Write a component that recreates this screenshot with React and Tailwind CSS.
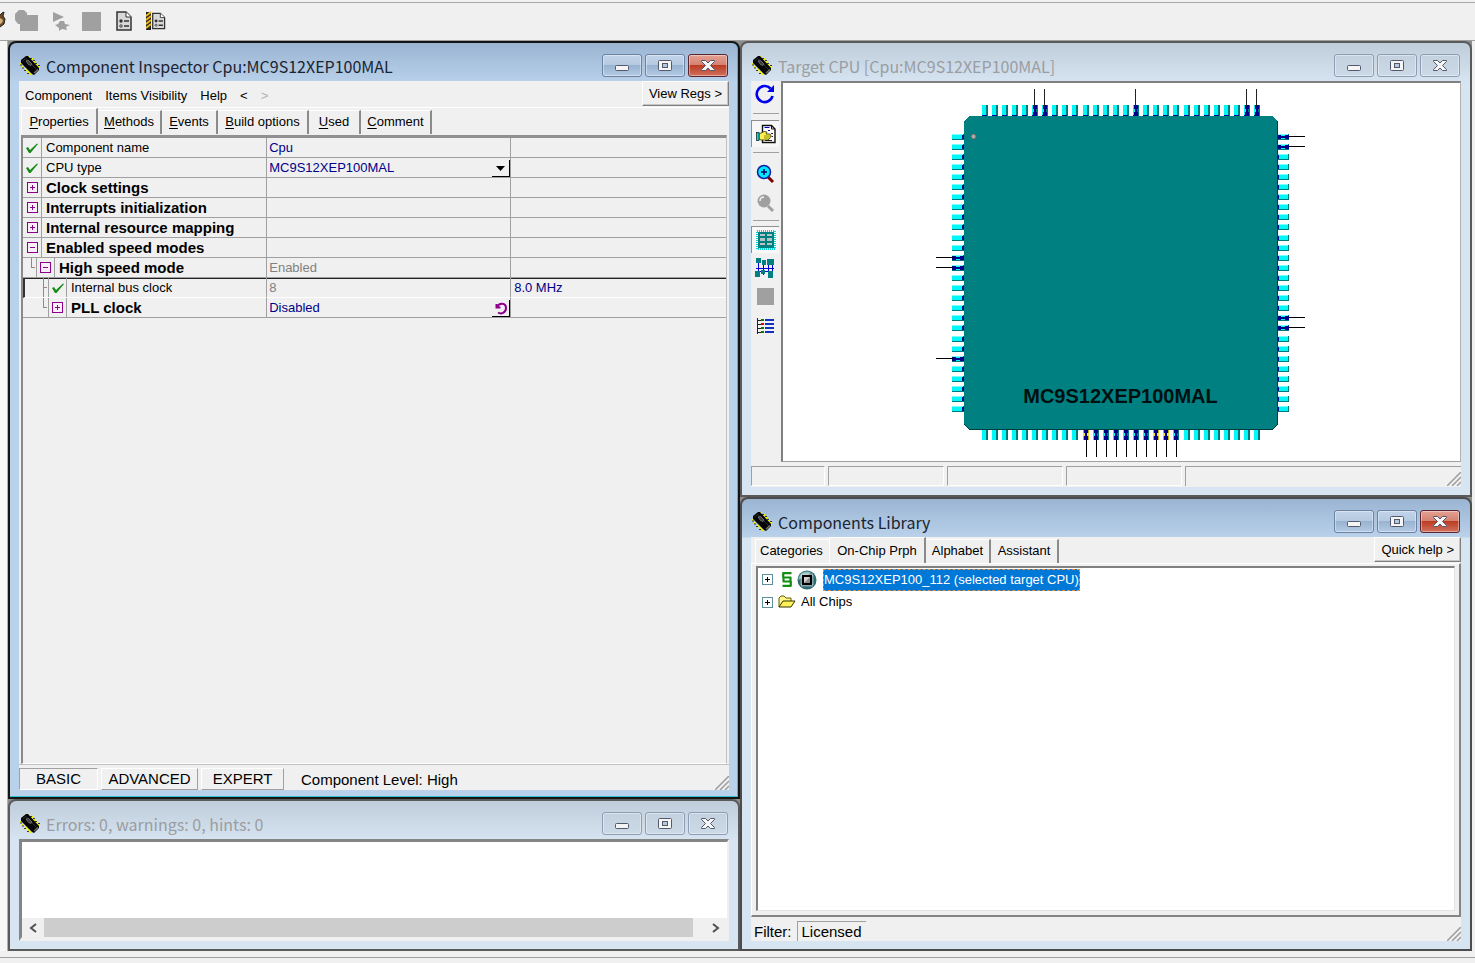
import React from 'react';

const ui = "font-['Liberation_Sans',Arial,sans-serif]";

function ChipIcon() {
  return (
    <svg className="h-[22px] w-[22px] shrink-0" viewBox="0 0 22 22" aria-hidden="true">
      <path d="M1 8H3V10H1ZM3 11H5V13H3ZM6 13H8V16H6ZM8 16H10V18H8ZM11 18H13V20H11Z" fill="#f0f000" />
      <path d="M9 1H11V3H9ZM12 3H14V5H12ZM14 6H16V8H14ZM17 8H19V10H17ZM19 11H21V13H19Z" fill="#f0f000" />
      <path d="M1 10H3M3 13H5M5 15.500H7M8 18.500H10M11 3.500H13M14 5.500H16M16 8.500H18M19 10.500H21" stroke="#222" strokeWidth="0.900" />
      <path d="M2 5L7 1H9L20 13V15L15 20L13 19L2 8Z" fill="#050505" />
      <path d="M3.500 6L7 3.500L17.500 14.500" stroke="#3c3c3c" strokeWidth="0.800" fill="none" />
      <path d="M7 6L9.500 5.500L13 9L12 10.500L9.500 9.500Z" fill="#3a3a3a" stroke="#8a8a8a" strokeWidth="0.700" />
      <path d="M15 18L19 14.500" stroke="#777" strokeWidth="1.200" />
    </svg>
  );
}

function CaptionButton({ kind, active, label }) {
  const isClose = kind === 'close';
  const skin = !active
    ? 'border-[#8e9db4] bg-linear-to-b from-[#c3d0de] to-[#ccd9e7]'
    : isClose
      ? 'border-[#5a2430] bg-[linear-gradient(#e3a193_0%,#d5806f_48%,#bb3d24_50%,#d0715d_100%)]'
      : 'border-[#6b82a3] bg-[linear-gradient(#c2d4e8_0%,#b4c9e0_48%,#98b2d0_50%,#b3cbe5_100%)]';
  return (
    <button
      type="button"
      aria-label={label}
      className={'flex h-[23px] w-10 items-center justify-center rounded-[3px] border shadow-[inset_0_0_0_1px_rgba(255,255,255,0.4)] ' + skin}
    >
      <svg className="h-[14px] w-4" viewBox="0 0 16 14" aria-hidden="true">
        {kind === 'min' && <rect x="1.5" y="6.5" width="13" height="5" rx="1" fill="#f5f5f5" stroke="#53586b" />}
        {kind === 'max' && (
          <>
            <rect x="1.5" y="1.5" width="13" height="10" rx="1" fill="#f5f5f5" stroke="#53586b" />
            <rect x="5.5" y="4.5" width="5" height="4" fill="#b4c9e0" stroke="#53586b" />
          </>
        )}
        {isClose && (
          <path d="M1.500 1.500H5.500L8 4L10.500 1.500H14.500V2.500L10.500 6.500L14.500 10.500V11.500H10.500L8 9L5.500 11.500H1.500V10.500L5.500 6.500L1.500 2.500Z" fill="#f5f5f5" stroke="#53586b" strokeLinejoin="round" />
        )}
      </svg>
    </button>
  );
}

function Window({ title, active, outlined, children }) {
  const frame = outlined
    ? 'bg-[linear-gradient(#9ab4d2_0px,#b9d1ea_40px)] border-[#141414] shadow-[inset_-1px_-1px_0_#35bfd3] pb-[7px]'
    : active
      ? 'bg-[linear-gradient(#9ab4d2_0px,#b9d1ea_38px,#d7e4f2_39px)] border-[#4c4c4c] pb-2'
      : 'bg-[linear-gradient(#bfcddb_0px,#d7e4f2_40px)] border-[#5a5a5a] pb-2';
  return (
    <section className={'flex min-h-0 min-w-0 flex-col rounded-t-lg border-2 px-[9px] ' + frame}>
      <header className="flex h-[38px] shrink-0 items-center gap-[5px] pt-[7px]">
        <ChipIcon />
        <h2 className={"min-w-0 flex-1 truncate text-[16px] leading-6 font-['Noto_Sans_CJK_SC','Noto_Sans',sans-serif] " + (active ? 'text-[#1b2430]' : 'text-[#9a9da1]')}>
          {title}
        </h2>
        <div className="flex gap-[3px] pr-px">
          <CaptionButton kind="min" active={active} label="Minimize" />
          <CaptionButton kind="max" active={active} label="Maximize" />
          <CaptionButton kind="close" active={active} label="Close" />
        </div>
      </header>
      <div className="flex min-h-0 flex-1 flex-col bg-[#f0f0f0]">{children}</div>
    </section>
  );
}

function Grip() {
  return (
    <svg className="h-[14px] w-[14px] self-end" viewBox="0 0 14 14" aria-hidden="true">
      <path d="M0 14L14 0M5 14L14 5M10 14L14 10" stroke="#9c9c9c" strokeWidth="1.500" />
    </svg>
  );
}

function SideButton({ children }) {
  return (
    <button type="button" className="h-[25px] border border-r-[#808080] border-b-[#808080] border-t-white border-l-white px-1.5 text-black shadow-[inset_-1px_-1px_0_#c4c4c4]">
      {children}
    </button>
  );
}

function Tab({ label, selected, accel, width }) {
  return (
    <button
      type="button"
      role="tab"
      aria-selected={selected}
      className={'flex items-center justify-center border-t border-r-2 border-t-white border-r-[#8a8a8a] ' + width + (selected ? ' h-[26px] border-l border-l-white' : ' h-6 pb-0.5')}
    >
      {accel ? (
        <span>
          <span className="underline underline-offset-2">{label[0]}</span>
          {label.slice(1)}
        </span>
      ) : (
        label
      )}
    </button>
  );
}

function Check() {
  return (
    <svg className="h-3 w-3" viewBox="0 0 12 12" aria-hidden="true">
      <path d="M0 6L2 5L4 8L11 1.500L12 2L4.500 11L3 11Z" fill="#178a17" />
    </svg>
  );
}

function Expander({ open, label }) {
  return (
    <button type="button" aria-label={(open ? 'Collapse ' : 'Expand ') + label}>
      <svg className="h-[11px] w-[11px]" viewBox="0 0 11 11" shapeRendering="crispEdges" aria-hidden="true">
        <rect x="0.500" y="0.500" width="10" height="10" fill="#f8f0f8" stroke="#8c008c" />
        <path d={open ? 'M3 5.500H8' : 'M3 5.500H8M5.500 3V8'} stroke="#8c008c" strokeWidth="1" />
      </svg>
    </button>
  );
}

const rows = [
  { label: 'Component name', icon: 'check', kind: 'input', value: 'Cpu' },
  { label: 'CPU type', icon: 'check', kind: 'select', value: 'MC9S12XEP100MAL' },
  { label: 'Clock settings', icon: 'plus' },
  { label: 'Interrupts initialization', icon: 'plus' },
  { label: 'Internal resource mapping', icon: 'plus' },
  { label: 'Enabled speed modes', icon: 'minus' },
  { label: 'High speed mode', icon: 'minus', depth: 1, value: 'Enabled', dim: true },
  { label: 'Internal bus clock', icon: 'check', depth: 2, value: '8', dim: true, extra: '8.0 MHz', selected: true, mid: true },
  { label: 'PLL clock', icon: 'plus', depth: 2, value: 'Disabled', reset: true },
];

function PropertyRow({ row }) {
  const bold = row.icon !== 'check';
  const line = row.selected ? 'border-b border-b-white shadow-[inset_0_1px_0_#222]' : 'border-b border-b-[#a0a0a0]';
  return (
    <tr className="h-5">
      <th scope="row" className={'p-0 text-left ' + line + (row.selected ? ' border-l-2 border-l-[#333]' : '')}>
        <div className="flex h-[19px] items-center">
          {row.depth > 0 && (
            <span className={'flex shrink-0 justify-end ' + (row.depth === 2 ? (row.selected ? 'w-[23px]' : 'w-[25px]') : 'w-[13px]')}>
              <svg className="h-[19px] w-2" viewBox="0 0 8 19" shapeRendering="crispEdges" aria-hidden="true">
                <path d={row.mid ? 'M3.500 0V19M3.500 9.500H7' : 'M3.500 0V9.500H7'} stroke="#9c8484" fill="none" />
              </svg>
            </span>
          )}
          <span className={'flex h-[19px] w-[19px] shrink-0 items-center justify-center border-r border-r-[#a0a0a0] ' + (row.depth ? 'border-l border-l-[#a0a0a0]' : '')}>
            {row.icon === 'check' ? <Check /> : <Expander open={row.icon === 'minus'} label={row.label} />}
          </span>
          <span className={'truncate pl-1 text-black ' + (bold ? 'text-[15px] leading-[19px] font-bold' : 'font-normal')}>{row.label}</span>
        </div>
      </th>
      <td className={'border-l border-l-[#a0a0a0] p-0 ' + line}>
        <div className={'flex h-[19px] items-center justify-between pl-0.5 ' + (row.dim ? 'text-[#808080]' : 'text-[#00008b]')}>
          {row.kind === 'input' && <input aria-label={row.label} defaultValue={row.value} className="w-full bg-transparent outline-none" />}
          {row.kind === 'select' && (
            <>
              <select aria-label={row.label} className="min-w-0 flex-1 appearance-none bg-transparent outline-none">
                <option>{row.value}</option>
              </select>
              <span className="flex h-[17px] w-[18px] items-center justify-center self-end border-r border-b border-r-black border-b-black">
                <svg className="h-[5px] w-[9px]" viewBox="0 0 9 5" aria-hidden="true">
                  <path d="M0 0H9L4.500 5Z" fill="#000" />
                </svg>
              </span>
            </>
          )}
          {!row.kind && row.value}
          {row.reset && (
            <button type="button" aria-label="Restore default" className="flex h-[17px] w-[18px] items-center justify-center self-end border-r border-b border-r-black border-b-black">
              <svg className="h-[14px] w-[14px]" viewBox="0 0 14 14" aria-hidden="true">
                <path d="M2.500 3V6.500H6.500M3 6C5 1.500 12 1.500 12 7C12 12 7 13.500 4 11.500" stroke="#8c008c" strokeWidth="2" fill="none" />
              </svg>
            </button>
          )}
        </div>
      </td>
      <td className={'border-l border-l-[#a0a0a0] p-0 ' + line}>
        <div className="flex h-[19px] items-center pl-[3px] text-[#00008b]">{row.extra}</div>
      </td>
    </tr>
  );
}

function Inspector() {
  return (
    <Window title="Component Inspector Cpu:MC9S12XEP100MAL" active outlined>
      <div className="flex h-[26px] shrink-0 items-start text-[13px] leading-4">
        <nav className="flex flex-1 items-center gap-[13px] pt-[7px] pl-1.5">
          <button type="button">Component</button>
          <button type="button">Items Visibility</button>
          <button type="button">Help</button>
          <button type="button" aria-label="Back">&lt;</button>
          <button type="button" aria-label="Forward" className="text-[#b0b0b0]">&gt;</button>
        </nav>
        <SideButton>View Regs &gt;</SideButton>
      </div>
      <div role="tablist" className="flex h-7 shrink-0 items-end border-t border-t-white pb-px pl-0.5 text-[13px] leading-4">
        <Tab label="Properties" accel selected width="w-[77px]" />
        <Tab label="Methods" accel width="w-16" />
        <Tab label="Events" accel width="w-14" />
        <Tab label="Build options" accel width="w-[91px]" />
        <Tab label="Used" accel width="w-[52px]" />
        <Tab label="Comment" accel width="w-[71px]" />
      </div>
      <div className="mx-0.5 min-h-0 flex-1 overflow-hidden border-t-[3px] border-r border-b border-l-2 border-t-[#909090] border-r-[#c0c0c0] border-b-white border-l-[#8a8a8a]">
        <table className="w-full table-fixed border-separate border-spacing-0 text-[13px] leading-4">
          <colgroup>
            <col className="w-[34.6%]" />
            <col className="w-[34.7%]" />
            <col />
          </colgroup>
          <tbody>
            {rows.map((row) => <PropertyRow key={row.label} row={row} />)}
          </tbody>
        </table>
      </div>
      <footer className="flex h-[26px] shrink-0 items-end gap-[3px] border-t border-t-[#c0c0c0] text-[15px] leading-5">
        <button type="button" aria-pressed="true" className="h-[22px] w-[79px] border border-t-[#a0a0a0] border-r-white border-b-white border-l-[#a0a0a0]">BASIC</button>
        <button type="button" className="h-[22px] w-[97px] border border-t-white border-r-[#a0a0a0] border-b-[#a0a0a0] border-l-white">ADVANCED</button>
        <button type="button" className="h-[22px] w-[83px] border border-t-white border-r-[#a0a0a0] border-b-[#a0a0a0] border-l-white">EXPERT</button>
        <span className="flex-1 pl-3.5">Component Level: High</span>
        <Grip />
      </footer>
    </Window>
  );
}

function Errors() {
  return (
    <Window title="Errors: 0, warnings: 0, hints: 0">
      <div className="flex min-h-0 flex-1 flex-col justify-end border-t-[3px] border-r-2 border-b-4 border-l-[3px] border-t-[#858585] border-r-[#f0f0f0] border-b-[#f0f0f0] border-l-[#858585] bg-white">
        <div className="flex h-[19px] bg-[#f0f0f0]">
          <button type="button" aria-label="Scroll left" className="flex w-[22px] items-center justify-center">
            <svg className="h-[10px] w-2" viewBox="0 0 8 10" aria-hidden="true"><path d="M7 1L2 5L7 9" stroke="#505050" strokeWidth="2" fill="none" /></svg>
          </button>
          <div className="flex-1 pr-3"><div className="h-full bg-[#cdcdcd]" /></div>
          <button type="button" aria-label="Scroll right" className="flex w-[22px] items-center justify-center">
            <svg className="h-[10px] w-2" viewBox="0 0 8 10" aria-hidden="true"><path d="M1 1L6 5L1 9" stroke="#505050" strokeWidth="2" fill="none" /></svg>
          </button>
        </div>
      </div>
    </Window>
  );
}

const pinAt = (start, i) => start + i * 10 + (i >= 10 ? 1 : 0) + (i >= 20 ? 1 : 0);
const indices = Array.from({ length: 28 }, (_, i) => i);
const wired = {
  top: [5, 6, 15, 26, 27],
  left: [12, 13, 22],
  right: [0, 1, 18, 19],
  bottom: [10, 11, 12, 13, 14, 15, 16, 17, 18, 19],
};
const yellow = [10, 17, 18];

function HPin({ x, y, on, dark }) {
  return (
    <g>
      <rect x={x} y={y} width="12" height="6" fill="#007878" />
      <rect x={x} y={y} width="11" height="5" fill="#7ff" />
      <rect x={x} y={y + 1} width="11" height="4" fill="#00f8f8" />
      <rect x={dark} y={y + 1} width="2" height="4" fill="#0a0a90" />
      {on && <path d={`M${x} ${y + 1}h4v1h4v-1h4v4h-4v-1h-4v1h-4z`} fill="#00008b" />}
    </g>
  );
}

function VPin({ x, y, on, dark, tint }) {
  return (
    <g>
      <rect x={x} y={y} width="6" height="11" fill="#007878" />
      <rect x={x} y={y} width="4" height="11" fill="#00f8f8" />
      <rect x={x} y={dark} width="5" height="1" fill="#0a0a90" />
      {on && tint && <rect x={x} y={y} width="6" height="11" fill="#c8b400" />}
      {on && <path d={`M${x + 1} ${y}h4v4h-1v3h1v4h-4v-4h1v-3h-1z`} fill="#00008b" />}
      {on && tint && <path d={`M${x} ${y + 4}h2v3h-2zM${x + 4} ${y + 4}h2v3h-2z`} fill="#f4e23a" />}
    </g>
  );
}

function ChipDrawing() {
  return (
    <svg className="h-[376px] w-[371px] shrink-0" viewBox="936 86 371 376" shapeRendering="crispEdges" role="img" aria-label="MC9S12XEP100MAL package pinout">
      {indices.map((i) => {
        const x = pinAt(982, i);
        const y = pinAt(134, i);
        return (
          <g key={i} stroke="none">
            <VPin x={x} y={105} dark={115} on={wired.top.includes(i)} />
            {wired.top.includes(i) && <rect x={x + 2} y="89" width="1" height="17" fill="#222" />}
            <VPin x={x} y={429} dark={429} on={wired.bottom.includes(i)} tint={yellow.includes(i)} />
            {wired.bottom.includes(i) && <rect x={x + 3} y="440" width="1" height="17" fill="#000" />}
            <HPin x={952} y={y} dark={962} on={wired.left.includes(i)} />
            {wired.left.includes(i) && <rect x="936" y={y + 2} width="17" height="1" fill="#000" />}
            <HPin x={1277} y={y} dark={1277} on={wired.right.includes(i)} />
            {wired.right.includes(i) && <rect x="1289" y={y + 2} width="16" height="1" fill="#000" />}
          </g>
        );
      })}
      <path d="M969 116H1272L1278 121V424L1272 430H969L964 425V121Z" fill="#003c3c" />
      <path d="M969 116H1272L1277 121V424L1272 429H969L964 424V121Z" fill="#008080" />
      <circle cx="973.500" cy="136.500" r="2.500" fill="#a8a8a8" stroke="#666" strokeWidth="1" shapeRendering="auto" />
      <text x="1120.500" y="403" textAnchor="middle" className="font-['Liberation_Sans',Arial,sans-serif] text-[20px] font-bold" fill="#001010">MC9S12XEP100MAL</text>
    </svg>
  );
}

function ToolButton({ label, pressed, tall = 'h-[29px]', children }) {
  return (
    <button type="button" aria-label={label} aria-pressed={pressed} className={'flex w-[28px] shrink-0 items-center justify-center ' + tall + (pressed ? ' border-t border-l border-t-[#909090] border-l-[#909090] bg-[#f8f8f8]' : '')}>
      {children}
    </button>
  );
}

function TargetCpu() {
  return (
    <Window title="Target CPU [Cpu:MC9S12XEP100MAL]">
      <div className="flex min-h-0 flex-1">
        <div role="toolbar" aria-label="View tools" className="flex w-[30px] shrink-0 flex-col">
          <ToolButton label="Rotate" tall="h-[26px]">
            <svg className="h-5 w-5" viewBox="0 0 20 20" aria-hidden="true">
              <path d="M15.500 4.500A8 8 0 1 0 17.500 12" stroke="#0000f0" strokeWidth="2.600" fill="none" />
              <path d="M19 1V8H12Z" fill="#0000f0" />
            </svg>
          </ToolButton>
          <hr className="mx-0.5 mt-1.5 mb-1.5 border-[#a0a0a0]" />
          <ToolButton label="Pin properties" pressed tall="h-[27px]">
            <svg className="h-5 w-5" viewBox="0 0 20 20" aria-hidden="true">
              <path d="M6.500 1.500H15.500L19 5V18.500H6.500Z" fill="#fff" stroke="#111" strokeWidth="1.400" />
              <path d="M15.500 1.500V5H19" fill="none" stroke="#111" />
              <path d="M9 16.500H16M15 9.500H17M15.500 12.500H17" stroke="#222" />
              <path d="M8.500 3.500H13.500M12 6.500H14" stroke="#0000d0" />
              <path d="M3 10L8 7.500L11 8L10 10H14L15 12L14 14L12 16H5L3 15Z" fill="#ffee50" stroke="#333300" strokeWidth="0.800" />
              <path d="M8 12H14M8 14H13" stroke="#777700" strokeWidth="0.800" />
              <rect x="0.500" y="8.500" width="2.500" height="8" fill="#00e0e0" stroke="#111" strokeWidth="0.700" />
            </svg>
          </ToolButton>
          <hr className="mx-0.5 mt-[5px] mb-1.5 border-[#a0a0a0]" />
          <ToolButton label="Zoom in">
            <svg className="h-5 w-5" viewBox="0 0 20 20" aria-hidden="true">
              <path d="M13 13L18 18" stroke="#800000" strokeWidth="3" />
              <circle cx="9" cy="8" r="6.500" fill="#00eaff" stroke="#1020a0" strokeWidth="1.500" />
              <path d="M6 8H12M9 5V11" stroke="#000060" strokeWidth="1.500" />
            </svg>
          </ToolButton>
          <ToolButton label="Zoom out">
            <svg className="h-5 w-5" viewBox="0 0 20 20" aria-hidden="true">
              <path d="M13 13L18 18" stroke="#a0a0a0" strokeWidth="3" />
              <circle cx="9" cy="8" r="6.500" fill="#a0a0a0" />
              <path d="M5 8C5 5 7 4 9 4" stroke="#f0f0f0" strokeWidth="1.500" fill="none" />
            </svg>
          </ToolButton>
          <hr className="mx-0.5 mt-[3px] mb-[5px] border-[#a0a0a0]" />
          <ToolButton label="Package view" pressed tall="h-[27px]">
            <svg className="h-5 w-5" viewBox="0 0 20 20" shapeRendering="crispEdges" aria-hidden="true">
              <rect x="1" y="1" width="18" height="18" fill="none" stroke="#00d8d8" strokeWidth="2" strokeDasharray="1 1" />
              <rect x="2" y="2" width="16" height="16" fill="#008080" />
              <path d="M4 4H9V6H4ZM11 4H16V6H11ZM4 8H9V11H4ZM11 8H16V11H11ZM4 13H9V15H4ZM11 13H16V15H11Z" fill="#b8c4c4" />
            </svg>
          </ToolButton>
          <ToolButton label="Block view">
            <svg className="h-5 w-5" viewBox="0 0 20 20" shapeRendering="crispEdges" aria-hidden="true">
              <path d="M3 5V15M8 6V17M13 5V16M17 7V15M1 10H19M4 13H15" stroke="#0000e0" />
              <path d="M1 0H6V5H1ZM7 2H11V7H7ZM12 1H19V7H12ZM0 13H5V19H0ZM6 12H10V16H6ZM13 13H18V20H13Z" fill="#008080" />
            </svg>
          </ToolButton>
          <ToolButton label="Stop">
            <span className="h-[17px] w-[17px] bg-[#a0a0a0]" />
          </ToolButton>
          <ToolButton label="Signal list">
            <svg className="h-[18px] w-[18px]" viewBox="0 0 18 18" shapeRendering="crispEdges" aria-hidden="true">
              <path d="M1.500 1V17M1 3.500H5M1 7.500H5M1 11.500H5M1 15.500H5" stroke="#222" fill="none" />
              <path d="M5 3H8M5 11H8M5 15H8" stroke="#008000" strokeWidth="2" />
              <path d="M5 7H8" stroke="#e00000" strokeWidth="2" />
              <path d="M9 3H18M9 7H18M9 11H18M9 15H18" stroke="#1030c0" strokeWidth="2" />
            </svg>
          </ToolButton>
        </div>
        <div className="flex min-w-0 flex-1 items-start justify-center overflow-hidden border-t-2 border-r border-b border-l-2 border-t-[#808080] border-r-[#b0b0b0] border-b-[#a0a0a0] border-l-[#808080] bg-white pt-[3px]">
          <ChipDrawing />
        </div>
      </div>
      <footer className="flex h-[25px] shrink-0 gap-[3px] pt-1 pb-px">
        <div className="w-[74px] border border-t-[#a0a0a0] border-r-white border-b-white border-l-[#a0a0a0]" />
        <div className="w-[116px] border border-t-[#a0a0a0] border-r-white border-b-white border-l-[#a0a0a0]" />
        <div className="w-[116px] border border-t-[#a0a0a0] border-r-white border-b-white border-l-[#a0a0a0]" />
        <div className="w-[116px] border border-t-[#a0a0a0] border-r-white border-b-white border-l-[#a0a0a0]" />
        <div className="flex flex-1 justify-end border-t border-l border-t-[#a0a0a0] border-l-[#a0a0a0]"><Grip /></div>
      </footer>
    </Window>
  );
}

function TreeExpander({ label }) {
  return (
    <button type="button" aria-label={'Expand ' + label}>
      <svg className="h-[11px] w-[11px]" viewBox="0 0 11 11" shapeRendering="crispEdges" aria-hidden="true">
        <rect x="0.500" y="0.500" width="10" height="10" fill="#fff" stroke="#5f8f98" />
        <path d="M3 5.500H8M5.500 3V8" stroke="#000" />
      </svg>
    </button>
  );
}

function Library() {
  return (
    <Window title="Components Library" active>
      <div className="flex h-[26px] shrink-0 items-start text-[13px] leading-4">
        <div role="tablist" className="flex h-[26px] flex-1 items-end pl-1">
          <button type="button" role="tab" aria-selected="false" className="h-6 w-[74px] border-t border-l border-t-white border-l-white pb-0.5 pl-1 text-left">Categories</button>
          <Tab label="On-Chip Prph" selected width="w-[97px]" />
          <Tab label="Alphabet" width="w-[65px]" />
          <Tab label="Assistant" width="w-[68px]" />
        </div>
        <SideButton>Quick help &gt;</SideButton>
      </div>
      <div className="flex min-h-0 flex-1 flex-col border-r-2 border-b-2 border-t border-l border-t-white border-r-[#858585] border-b-[#858585] border-l-white px-1 pt-0.5 pb-1">
        <ul role="tree" className="flex flex-1 flex-col border-t-2 border-r border-b border-l-2 border-t-[#808080] border-r-[#e3e3e3] border-b-[#e3e3e3] border-l-[#808080] bg-white pl-1 text-[13px] leading-4">
          <li role="treeitem" aria-selected="true" className="flex h-[23px] items-center">
            <TreeExpander label="MC9S12XEP100_112" />
            <svg className="ml-2 h-[17px] w-3" viewBox="0 0 12 17" aria-hidden="true">
              <path d="M10.500 2.200H2.200V6.500H9.500V10M2.500 6V10.500H9.800V14.800H1.500" stroke="#109010" strokeWidth="2.200" strokeLinejoin="round" fill="none" />
            </svg>
            <svg className="ml-1 h-5 w-5" viewBox="0 0 20 20" aria-hidden="true">
              <circle cx="10" cy="10" r="9.500" fill="#2f6b70" />
              <path d="M1.500 10A8.500 8.500 0 0 1 14 2.500L10 6L5 8Z" fill="#8cc0c0" />
              <rect x="4.500" y="4.500" width="11" height="11" fill="none" stroke="#e6e6e6" strokeWidth="2" strokeDasharray="1 1" />
              <rect x="5" y="5" width="10" height="10" fill="#000" />
              <rect x="7" y="7" width="6" height="6" fill="#8c8c8c" />
              <path d="M7 13V7H13Z" fill="#d0d0d0" />
            </svg>
            <button type="button" className="ml-1.5 h-[22px] border border-dashed border-[#e09040] bg-[#0078d7] text-white">
              MC9S12XEP100_112 (selected target CPU)
            </button>
          </li>
          <li role="treeitem" aria-selected="false" className="flex h-[22px] items-center">
            <TreeExpander label="All Chips" />
            <svg className="ml-[5px] h-[14px] w-[18px]" viewBox="0 0 18 14" aria-hidden="true">
              <path d="M1 12V3L3 1H6L8 3H13V6" fill="#fff68a" stroke="#665c00" />
              <path d="M1 12L5 6H17L13 12Z" fill="#fff15a" stroke="#333000" />
            </svg>
            <button type="button" className="ml-[5px]">All Chips</button>
          </li>
        </ul>
      </div>
      <footer className="flex h-6 shrink-0 items-end text-[15px] leading-[18px]">
        <label htmlFor="filter" className="px-[3px]">Filter:</label>
        <button id="filter" type="button" className="ml-0.5 h-5 border-t border-l border-t-[#a0a0a0] border-l-[#a0a0a0] px-1">Licensed</button>
        <span className="flex-1" />
        <Grip />
      </footer>
    </Window>
  );
}

function Page() {
  return (
    <>
      <path d="M2 1H11L16 6V19H2Z" fill="#d8d8d8" stroke="#333" strokeWidth="1.500" />
      <path d="M11 1V6H16" fill="#fff" stroke="#333" />
      <path d="M9 10H14M9 15H14" stroke="#333" strokeWidth="1.500" />
      <circle cx="6" cy="10" r="1.700" fill="#333" />
      <circle cx="6" cy="15" r="1.200" fill="#fff" stroke="#333" />
    </>
  );
}

function Toolbar() {
  return (
    <div role="toolbar" aria-label="Main tools" className="flex h-[41px] shrink-0 items-center border-b border-b-[#a0a0a0] pt-0.5 shadow-[inset_0_2px_0_#f0f0f0,inset_0_3px_0_#a8a8a8]">
      <button type="button" aria-label="Debug" className="w-[14px]">
        <svg className="h-5 w-[6px]" viewBox="0 0 6 20" aria-hidden="true">
          <path d="M0 4L2 2L4 1L3 5L5 8L4 13L0 16" fill="#6b4a28" stroke="#222" />
          <path d="M0 7L3 9L2 12L0 13" fill="#d8b080" />
        </svg>
      </button>
      <button type="button" aria-label="Make" className="mr-3.5">
        <svg className="h-[22px] w-6" viewBox="0 0 24 22" aria-hidden="true">
          <path d="M5 0H10L13 3V5H24V21H6V14H4L1 10V4Z" fill="#a0a0a0" />
        </svg>
      </button>
      <button type="button" aria-label="Run" className="mr-3">
        <svg className="h-5 w-[18px]" viewBox="0 0 18 20" aria-hidden="true">
          <path d="M1 1L12 6L1 11Z" fill="#a0a0a0" />
          <path d="M3 14L6 13L8 10L12 10L13 13L18 14L14 16L15 19L10 18L7 20L7 17Z" fill="#a0a0a0" />
        </svg>
      </button>
      <button type="button" aria-label="Stop" className="mr-3.5">
        <span className="block h-[19px] w-[19px] bg-[#a0a0a0]" />
      </button>
      <button type="button" aria-label="Report" className="mr-[13px]">
        <svg className="h-[22px] w-[18px]" viewBox="0 0 18 20" aria-hidden="true"><Page /></svg>
      </button>
      <button type="button" aria-label="Project report">
        <svg className="h-5 w-5" viewBox="0 0 20 20" aria-hidden="true">
          <rect x="0" y="1" width="5" height="18" fill="#222" />
          <path d="M0 5L5 1M0 9L5 5M0 13L5 9M0 17L5 13" stroke="#e8b820" strokeWidth="2" />
          <g transform="translate(5 1.500) scale(0.850)"><Page /></g>
        </svg>
      </button>
    </div>
  );
}

export default function App() {
  return (
    <div className={'flex h-screen min-h-[640px] flex-col overflow-hidden bg-[#f0f0f0] text-black ' + ui}>
      <Toolbar />
      <main className="flex min-h-0 flex-1 pr-[3px]">
        <div className="w-2 shrink-0 border-r border-r-[#b0b0b0] bg-[#f7f7f7]" />
        <div className="grid min-w-0 flex-1 grid-cols-2 bg-[#8c8c8c]">
          <div className="grid min-h-0 min-w-0 grid-rows-[758fr_152fr]">
            <Inspector />
            <Errors />
          </div>
          <div className="grid min-h-0 min-w-0 grid-rows-[456fr_454fr]">
            <TargetCpu />
            <Library />
          </div>
        </div>
      </main>
      <div className="h-3 shrink-0 pt-1.5">
        <div className="h-1.5 border-t border-t-[#a0a0a0]" />
      </div>
    </div>
  );
}
